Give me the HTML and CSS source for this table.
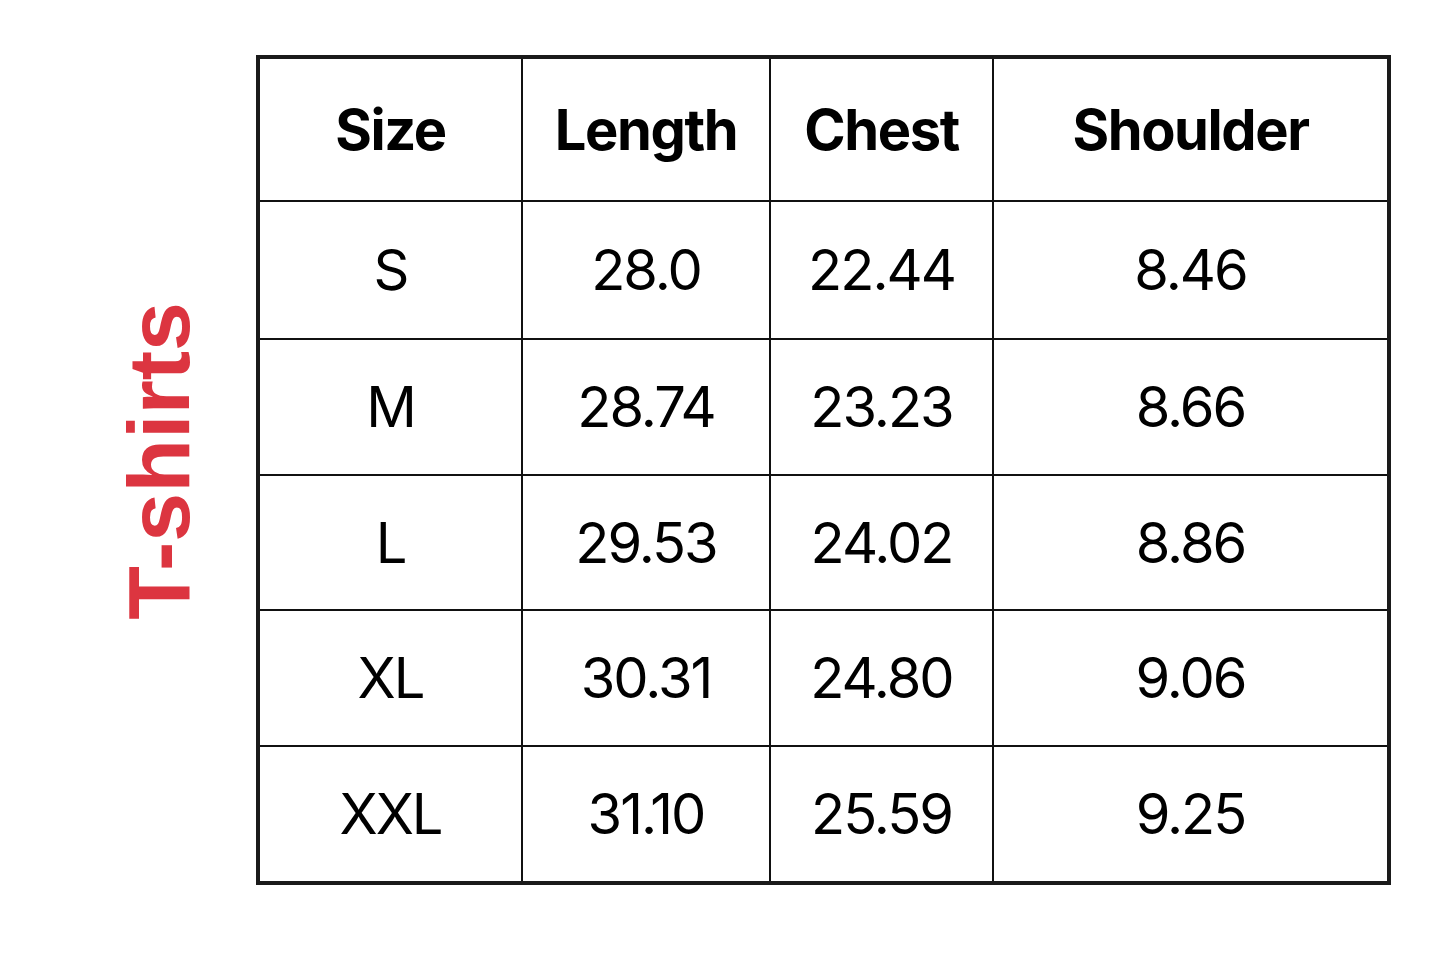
FILE: index.html
```html
<!DOCTYPE html>
<html lang="en">
<head>
<meta charset="utf-8">
<title>T-shirts size chart</title>
<link rel="stylesheet" href="styles.css">
</head>
<body>
<div class="page">
  <div class="side">
    <div class="side-label">T-shirts</div>
  </div>
  <div class="chart">
    <div class="cell head">Size</div>
    <div class="cell head">Length</div>
    <div class="cell head">Chest</div>
    <div class="cell head">Shoulder</div>

    <div class="cell">S</div>
    <div class="cell">28.0</div>
    <div class="cell">22.44</div>
    <div class="cell">8.46</div>

    <div class="cell">M</div>
    <div class="cell">28.74</div>
    <div class="cell">23.23</div>
    <div class="cell">8.66</div>

    <div class="cell">L</div>
    <div class="cell">29.53</div>
    <div class="cell">24.02</div>
    <div class="cell">8.86</div>

    <div class="cell">XL</div>
    <div class="cell">30.31</div>
    <div class="cell">24.80</div>
    <div class="cell">9.06</div>

    <div class="cell">XXL</div>
    <div class="cell">31.10</div>
    <div class="cell">25.59</div>
    <div class="cell">9.25</div>
  </div>
</div>
</body>
</html>
```

FILE: styles.css
```css
html, body {
  margin: 0;
  padding: 0;
  background: #ffffff;
}

body {
  font-family: Inter, "Liberation Sans", Arial, sans-serif;
  color: #000000;
}

.page {
  display: flex;
  padding-top: 55px;
}

.side {
  width: 256px;
  display: flex;
  align-items: center;
  justify-content: flex-end;
  padding-right: 53px;
  padding-bottom: 18px;
  box-sizing: border-box;
}

.side-label {
  writing-mode: vertical-rl;
  transform: rotate(180deg);
  font-family: "Liberation Sans", Arial, sans-serif;
  font-size: 88px;
  font-weight: 700;
  line-height: 1;
  color: #dc3540;
}

.chart {
  display: grid;
  grid-template-columns: 261px 246px 221px 393px;
  grid-template-rows: 141px 136px 134px 133px 134px 134px;
  gap: 2px;
  background: #111111;
  border: 4px solid #1a1a1a;
}

.cell {
  background: #ffffff;
  display: flex;
  align-items: center;
  justify-content: center;
  font-size: 56px;
  font-weight: 400;
  letter-spacing: -2px;
}

.cell.head {
  font-size: 56px;
  font-weight: 700;
  letter-spacing: -1.4px;
}
```
